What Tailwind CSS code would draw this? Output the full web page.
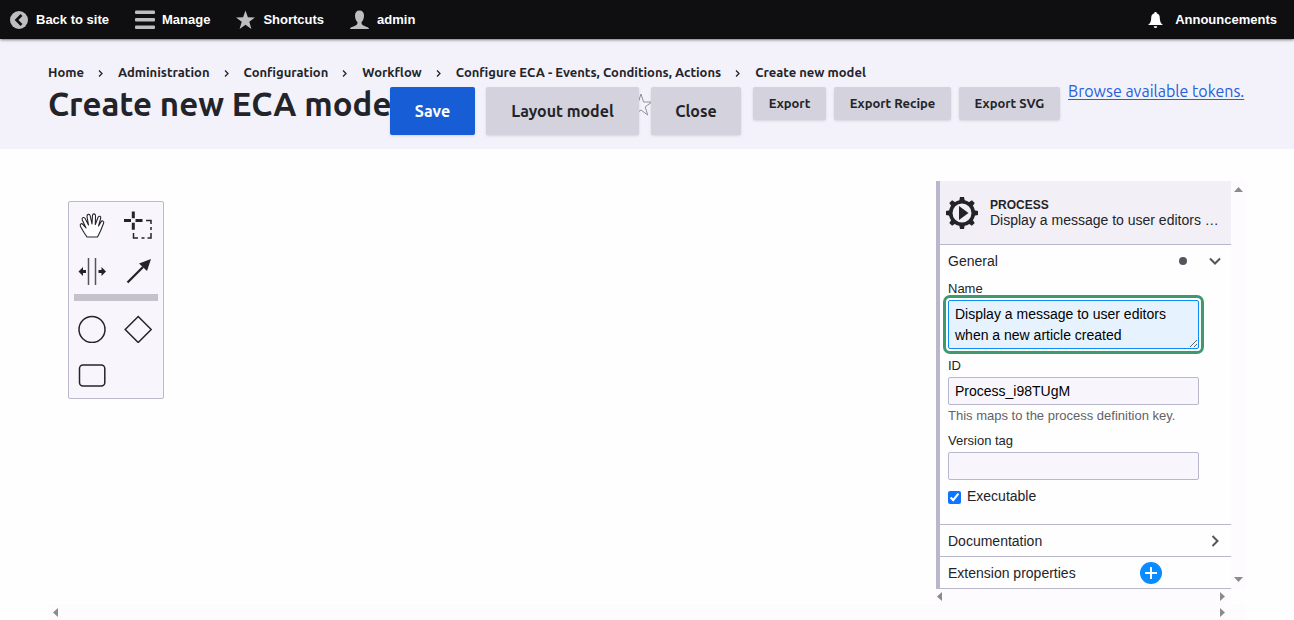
<!DOCTYPE html>
<html lang="en">
<head>
  <meta charset="UTF-8">
  <meta name="viewport" content="width=device-width, initial-scale=1.0">
  <title>Create new ECA model</title>
  <script src="https://cdn.jsdelivr.net/npm/@tailwindcss/browser@4"></script>
</head>

<body class="bg-[#fefefe] text-[#232429] font-['Ubuntu','Noto_Sans',sans-serif] overflow-hidden">
  <!-- Toolbar -->
  <nav class="relative z-10 flex h-[39px] items-center bg-[#0f0e11] pl-[10px] pr-[17px] text-[13px] font-bold text-white shadow-sm shadow-black/40 font-['Liberation_Sans',sans-serif]">
    <a href="#" class="flex items-center gap-2">
      <svg class="size-[18px]" viewBox="0 0 18 18"><circle cx="9" cy="9" r="9" fill="#bebebe"/><path d="M11.5 4 6.5 9l5 5" fill="none" stroke="#0f0e11" stroke-width="2.6"/></svg>
      Back to site
    </a>
    <a href="#" class="ml-[26px] flex items-center gap-[7px]">
      <svg class="h-5 w-5" viewBox="0 0 20 20" fill="#bebebe"><rect y=".5" width="20" height="3.500" rx="1"/><rect y="8" width="20" height="3.500" rx="1"/><rect y="15.500" width="20" height="3.500" rx="1"/></svg>
      Manage
    </a>
    <a href="#" class="ml-[26px] flex items-center gap-2">
      <svg class="h-5 w-[19px]" viewBox="0 0 19 20" fill="#bebebe"><path d="m9.500.5 2.400 6.800 7.100.2-5.700 4.300 2.100 7.200-5.900-4.200L3.600 19l2.100-7.200L0 7.500l7.100-.2z"/></svg>
      Shortcuts
    </a>
    <a href="#" class="ml-[26px] flex items-center gap-2">
      <svg class="h-5 w-[19px]" viewBox="0 0 19 20" fill="#bebebe"><path d="M9.500.5C6.500.5 5 2.500 5 5.500c0 3 1 5.300 2.500 6.800 0 2.200-.5 2.700-3 3.700C2 16.900 0 17.600 0 19h19c0-1.400-2-2.100-4.500-3-2.500-1-3-1.500-3-3.700C13 10.800 14 8.500 14 5.500c0-3-1.500-5-4.500-5z"/></svg>
      admin
    </a>
    <a href="#" class="ml-auto flex items-center gap-3">
      <svg class="h-4 w-[15px]" viewBox="0 0 15 16" fill="#fff"><path d="M7.500 0C6.700 0 6.300.5 6.300 1.200 4 1.800 3.200 3.500 3.200 6c0 3.500-1 5.500-3.200 7h15c-2.200-1.500-3.200-3.500-3.200-7 0-2.500-.8-4.200-3.100-4.800C8.700.5 8.300 0 7.500 0zM5.800 14.200h3.400c0 1-.7 1.800-1.700 1.800s-1.700-.8-1.700-1.800z"/></svg>
      Announcements
    </a>
  </nav>

  <!-- Page header -->
  <header class="relative h-[110px] bg-[#f3f2fb] px-12 pt-6">
    <ol class="flex h-5 items-center whitespace-nowrap text-[13px] font-bold">
      <li><a href="#">Home</a></li>
      <li class="flex items-center"><svg class="mr-[15px] ml-[14px] h-[7px] w-[5px]" viewBox="0 0 5 7" fill="none" stroke="currentColor" stroke-width="1.300"><path d="m1 .5 3 3-3 3"/></svg><a href="#">Administration</a></li>
      <li class="flex items-center"><svg class="mr-[15px] ml-[14px] h-[7px] w-[5px]" viewBox="0 0 5 7" fill="none" stroke="currentColor" stroke-width="1.300"><path d="m1 .5 3 3-3 3"/></svg><a href="#">Configuration</a></li>
      <li class="flex items-center"><svg class="mr-[15px] ml-[14px] h-[7px] w-[5px]" viewBox="0 0 5 7" fill="none" stroke="currentColor" stroke-width="1.300"><path d="m1 .5 3 3-3 3"/></svg><a href="#">Workflow</a></li>
      <li class="flex items-center"><svg class="mr-[15px] ml-[14px] h-[7px] w-[5px]" viewBox="0 0 5 7" fill="none" stroke="currentColor" stroke-width="1.300"><path d="m1 .5 3 3-3 3"/></svg><a href="#">Configure ECA - Events, Conditions, Actions</a></li>
      <li class="flex items-center"><svg class="mr-[15px] ml-[14px] h-[7px] w-[5px]" viewBox="0 0 5 7" fill="none" stroke="currentColor" stroke-width="1.300"><path d="m1 .5 3 3-3 3"/></svg><a href="#">Create new model</a></li>
    </ol>
    <h1 class="whitespace-nowrap text-[33px] leading-[42px] font-bold">Create new ECA model</h1>
    <span class="absolute left-[486px] top-[54px] h-[23px] w-1 bg-[#e29a68]"></span>
    <svg class="absolute left-[629px] top-[54px] size-6" viewBox="0 0 24 24" fill="none" stroke="#919297"><path d="m12 1 2.600 8h8.200l-6.600 4.900L18.700 22 12 17l-6.700 5 2.500-8.100L1.200 9h8.200z"/></svg>

    <!-- Model actions -->
    <div class="absolute left-[390px] top-12 flex items-start whitespace-nowrap font-bold">
      <button class="h-12 w-[85px] rounded-xs bg-[#175dd5] text-base text-white shadow-sm">Save</button>
      <button class="ml-[11px] h-12 w-[153px] rounded-xs bg-[#d4d2dc] text-base shadow-sm">Layout model</button>
      <button class="ml-3 h-12 w-[90px] rounded-xs bg-[#d4d2dc] text-base shadow-sm">Close</button>
      <button class="ml-3 h-[33px] w-[73px] rounded-xs bg-[#d4d2dc] text-[13px] shadow-sm">Export</button>
      <button class="ml-2 h-[33px] w-[117px] rounded-xs bg-[#d4d2dc] text-[13px] shadow-sm">Export Recipe</button>
      <button class="ml-2 h-[33px] w-[101px] rounded-xs bg-[#d4d2dc] text-[13px] shadow-sm">Export SVG</button>
      <a href="#" class="-mt-2 ml-2 text-base font-normal text-[#2460d8] underline underline-offset-2">Browse available tokens.</a>
    </div>
  </header>

  <!-- Modeler -->
  <main class="px-12 pt-8 font-['Liberation_Sans',sans-serif]">
    <div class="flex">
      <div class="min-w-0 flex-1 pt-5 pl-5">
        <div class="grid w-24 grid-cols-[46px_46px] rounded-xs border border-[#bbb9cc] bg-[#f8f6fc]">
          <button aria-label="Hand tool" class="flex h-[46px] items-center justify-center">
            <svg class="size-7" viewBox="0 0 28 28" fill="#fff" stroke="#232429" stroke-width="1.100" stroke-linejoin="round" stroke-linecap="round"><path d="M9 26 6 21.500 2.500 15.500C1.500 13 3.500 11.700 5 13.700L8 17 4.300 9C3.500 6.500 6 5.500 7.300 7.800L10.500 14 9 5.500C8.900 3 11.500 2.500 12.200 4.800L14 13 14.500 4.500C14.800 2.200 17.500 2.300 17.500 4.800L17.300 13.500 20 6.500C20.900 4.300 23.400 5.200 22.600 7.600L20.500 15 23 11C24.200 9 26.500 10.200 25.500 12.500L22.500 20 19.500 26Z"/></svg>
          </button>
          <button aria-label="Lasso tool" class="flex h-[46px] items-center justify-center">
            <svg class="size-7" viewBox="0 0 28 28" fill="none" stroke="#232429"><path d="M0 9.500h7M11.500 9.500h7M9.300 .5v6.700M9.300 11.800v7" stroke-width="3"/><path d="M22 9.500h5V13M27 16v3M27 22v5H23.500M20.500 27h-3M14 27H9.500V22" stroke-width="1.500"/></svg>
          </button>
          <button aria-label="Space tool" class="flex h-[46px] items-center justify-center">
            <svg class="size-7" viewBox="0 0 28 28" fill="#232429"><path d="M10.500 1v27M17.500 1v27" stroke="#55555e" stroke-width="1.500"/><path d="M.5 14.500l4.500-4.500v3h3v3H5v3zM28 14.500l-4.500-4.500v3h-3v3h3v3z"/></svg>
          </button>
          <button aria-label="Global connect tool" class="flex h-[46px] items-center justify-center">
            <svg class="size-7" viewBox="0 0 28 28" fill="#232429"><path d="M3.500 25.500 19 10" stroke="#232429" stroke-width="2.300"/><path d="M27 2 23 14 15 6.500z"/></svg>
          </button>
          <hr class="col-span-2 mr-[3px] mb-[5px] ml-[5px] h-[7px] border-0 bg-[#c5c2cb]">
          <button aria-label="Create start event" class="flex h-[46px] items-center justify-center">
            <svg class="size-7" viewBox="0 0 28 28" fill="none" stroke="#232429" stroke-width="1.500"><circle cx="14" cy="14.500" r="13"/></svg>
          </button>
          <button aria-label="Create gateway" class="flex h-[46px] items-center justify-center">
            <svg class="size-7" viewBox="0 0 28 28" fill="none" stroke="#232429" stroke-width="1.500"><path d="m14.200 1.500 13 13-13 13-13-13z"/></svg>
          </button>
          <button aria-label="Create task" class="flex h-[46px] items-center justify-center">
            <svg class="size-7" viewBox="0 0 28 28" fill="none" stroke="#232429" stroke-width="1.500"><rect x="1.500" y="4" width="25.300" height="21" rx="3.500"/></svg>
          </button>
        </div>
      </div>

      <!-- Properties panel -->
      <aside class="w-[295px] shrink-0 border-l-4 border-[#b9b7cb] text-sm">
        <div class="flex h-16 items-center gap-3 border-b border-[#b9b7cb] bg-[#f2f0f6] pr-3 pl-[6px]">
          <svg class="size-8 shrink-0" viewBox="0 0 32 32" fill="#232429">
            <path d="M13 5 14 0h4l1 5zM13 27l1 5h4l1-5zM5 13 0 14v4l5 1zM27 13l5 1v4l-5 1z"/>
            <path d="M13 5 14 0h4l1 5zM13 27l1 5h4l1-5zM5 13 0 14v4l5 1zM27 13l5 1v4l-5 1z" transform="rotate(45 16 16)"/>
            <circle cx="16" cy="16" r="11.300" fill="none" stroke="#232429" stroke-width="3.600"/>
            <path d="m13 9 9.500 7-9.500 7z"/>
          </svg>
          <div class="min-w-0 flex-1 leading-[15px]">
            <div class="text-[12px] font-bold">PROCESS</div>
            <div class="truncate">Display a message to user editors when a new article created</div>
          </div>
        </div>

        <section class="border-b border-[#b9b7cb] pb-5">
          <button class="flex h-8 w-full items-center pr-[10px] pl-2">
            <span>General</span>
            <span class="mr-[22px] ml-auto size-2 rounded-full bg-[#55555e]"></span>
            <svg class="size-3" viewBox="0 0 12 12" fill="none" stroke="#55555e" stroke-width="2"><path d="m1 3.500 5 5 5-5"/></svg>
          </button>
          <div class="flex flex-col pr-8 pl-2">
            <label for="name" class="mt-1 text-[13px] leading-[15px]">Name</label>
            <textarea id="name" class="mt-1 h-[49px] w-full rounded-xs border border-[#0c8cf5] bg-[#e6f3ff] px-[6px] pt-[3px] pb-[2px] leading-[21px] text-black outline-3 outline-offset-2 outline-[#3f996c]">Display a message to user editors when a new article created</textarea>
            <label for="process-id" class="mt-[9px] text-[13px] leading-[15px]">ID</label>
            <input id="process-id" type="text" value="Process_i98TUgM" class="mt-1 h-7 w-full rounded-xs border border-[#b9b7cb] bg-[#f8f6fc] px-[6px] text-black">
            <p class="mt-[3px] text-[13px] leading-[15px] text-[#626269]">This maps to the process definition key.</p>
            <label for="version" class="mt-[10px] text-[13px] leading-[15px]">Version tag</label>
            <input id="version" type="text" class="mt-1 h-7 w-full rounded-xs border border-[#b9b7cb] bg-[#f8f6fc] px-[6px]">
            <label class="mt-2 flex items-start gap-[6px] leading-4">
              <input type="checkbox" checked class="mt-[3px] size-[13px] accent-[#0d75ff]">
              Executable
            </label>
          </div>
        </section>

        <button class="flex h-8 w-full items-center justify-between border-b border-[#b9b7cb] pr-[10px] pl-2">
          <span>Documentation</span>
          <svg class="size-3" viewBox="0 0 12 12" fill="none" stroke="#55555e" stroke-width="2"><path d="m3.500 1 5 5-5 5"/></svg>
        </button>
        <div class="flex h-8 items-center justify-between border-b border-[#b9b7cb] pr-[69px] pl-2">
          <span>Extension properties</span>
          <button aria-label="Create new list item" class="flex size-[22px] items-center justify-center rounded-full bg-[#0a8bff]">
            <svg class="size-3" viewBox="0 0 12 12" stroke="#fff" stroke-width="2"><path d="M6 0v12M0 6h12"/></svg>
          </button>
        </div>
      </aside>
      <div class="flex w-[15px] flex-col items-center justify-between bg-[#fdfbfe] pt-[6px] pb-[7px]">
        <svg class="h-[5px] w-[9px]" viewBox="0 0 9 5" fill="#8b8b8b"><path d="M0 5 4.500 0 9 5z"/></svg>
        <svg class="h-[5px] w-[9px]" viewBox="0 0 9 5" fill="#8b8b8b"><path d="m0 0 4.500 5L9 0z"/></svg>
      </div>
    </div>

    <!-- Horizontal scrollbars -->
    <div class="flex justify-end pr-[15px]">
      <div class="flex h-[15px] w-[295px] items-center justify-between bg-[#fdfbfe] pr-[6px] pl-[1px]">
        <svg class="h-[9px] w-[5px]" viewBox="0 0 5 9" fill="#8b8b8b"><path d="M5 0 0 4.500 5 9z"/></svg>
        <svg class="h-[9px] w-[5px]" viewBox="0 0 5 9" fill="#8b8b8b"><path d="m0 0 5 4.500L0 9z"/></svg>
      </div>
    </div>
    <div class="flex h-4 items-center justify-between bg-[#fdfbfe] pr-[21px] pl-[5px]">
      <svg class="h-[9px] w-[5px]" viewBox="0 0 5 9" fill="#8b8b8b"><path d="M5 0 0 4.500 5 9z"/></svg>
      <svg class="h-[9px] w-[5px]" viewBox="0 0 5 9" fill="#8b8b8b"><path d="m0 0 5 4.500L0 9z"/></svg>
    </div>
  </main>
</body>
</html>
